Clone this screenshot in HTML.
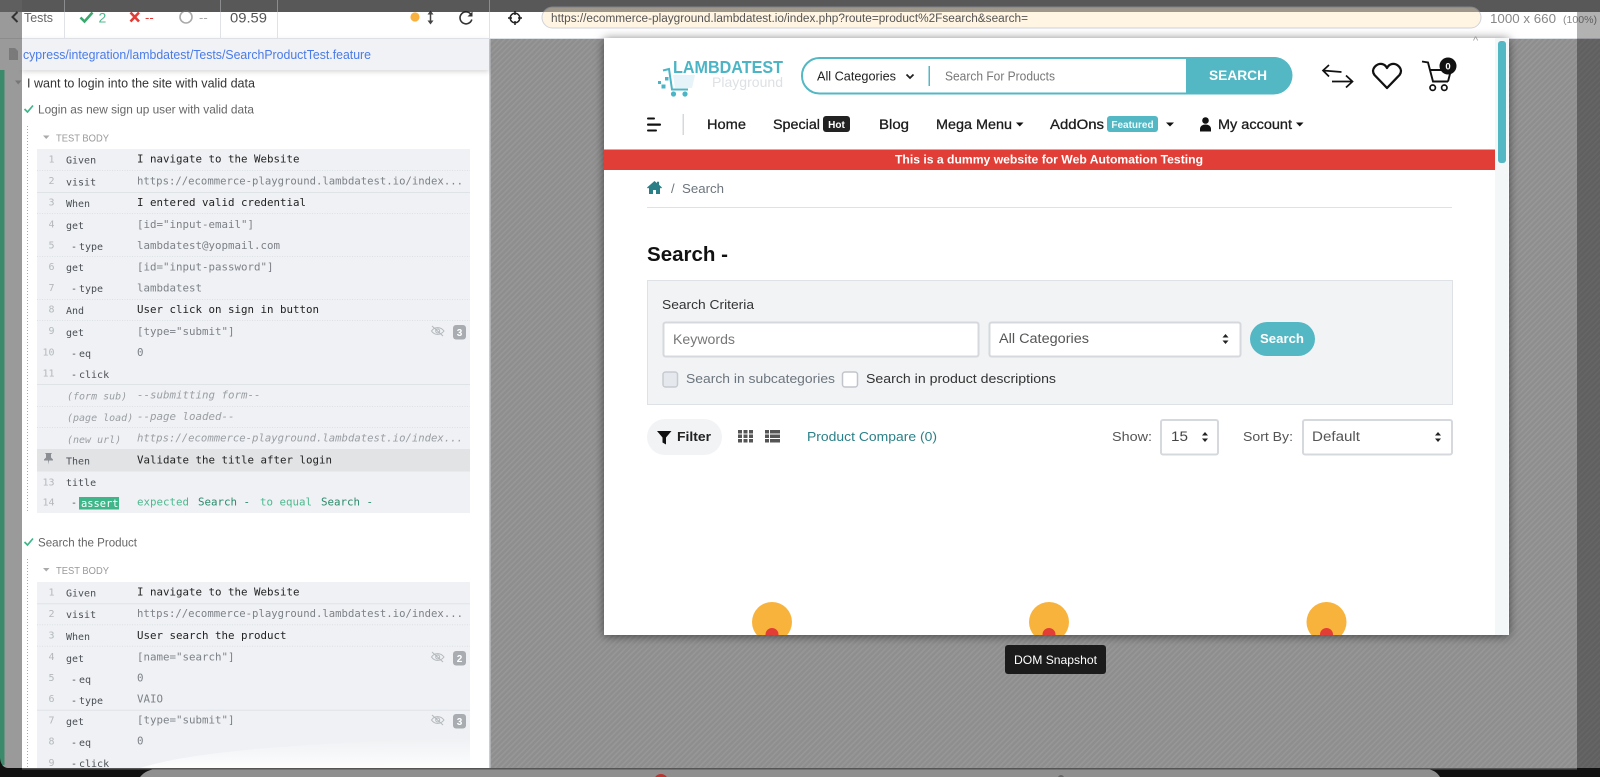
<!DOCTYPE html>
<html><head><meta charset="utf-8"><title>Cypress Runner</title>
<style>
html,body{margin:0;padding:0;width:1600px;height:777px;overflow:hidden;background:#8f8f8f}
svg{display:block}
text{font-family:"Liberation Sans",sans-serif;white-space:pre}
.m text,text.m{font-family:"DejaVu Sans Mono","Liberation Mono",monospace;font-size:10.8px}
.l text,text.l{font-family:"DejaVu Sans Mono","Liberation Mono",monospace;font-size:10px;fill:#4a4f55}
.n text{font-family:"DejaVu Sans Mono","Liberation Mono",monospace;font-size:10px;fill:#b4b8bc;text-anchor:end}
.i text{font-family:"DejaVu Sans Mono","Liberation Mono",monospace;font-size:10px;font-style:italic;fill:#9a9ea3}
.k{fill:#222}.g{fill:#7d8288}
.nav{font-size:13.5px;fill:#1c1c1c;stroke:#1c1c1c;stroke-width:.3px}
</style></head><body>
<svg xmlns="http://www.w3.org/2000/svg" width="1600" height="777" viewBox="0 0 1600 777">
<defs>
<pattern id="h" width="4" height="4" patternUnits="userSpaceOnUse" patternTransform="rotate(-45)"><rect width="4" height="4" fill="#8e8e8e"/><rect width="4" height="1.6" fill="#979797"/></pattern>
<filter id="sh" x="-5%" y="-5%" width="110%" height="110%"><feDropShadow dx="0" dy="1" stdDeviation="5" flood-color="#000" flood-opacity=".55"/></filter>
<filter id="sh2" x="-5%" y="-50%" width="110%" height="200%"><feDropShadow dx="0" dy="2" stdDeviation="2.5" flood-color="#000" flood-opacity=".15"/></filter>
<clipPath id="fr"><rect x="604" y="38" width="891" height="597"/></clipPath>
<linearGradient id="fade" x1="0" y1="0" x2="0" y2="1"><stop offset="0" stop-color="#fff" stop-opacity="0"/><stop offset="1" stop-color="#fff" stop-opacity=".85"/></linearGradient>
</defs>

<!-- stage -->
<rect x="489" y="38" width="1111" height="731" fill="url(#h)"/>

<!-- sidebar -->
<rect x="0" y="0" width="22" height="777" fill="#9a9a9a"/>
<rect x="0" y="70" width="4.5" height="695" fill="#3c8a6c"/>
<rect x="22" y="12" width="467" height="757" fill="#fff"/>
<rect x="489" y="38" width="1.5" height="731" fill="#c9cdd2"/>

<!-- test block 1 -->
<line x1="27.5" y1="126" x2="27.5" y2="513" stroke="#aaa" stroke-dasharray="1 2"/>
<rect x="37" y="149" width="433" height="364" fill="#eff1f4"/>
<rect x="37" y="449" width="433" height="22.5" fill="#e1e3e5"/>
<g stroke="#dde1e4" stroke-dasharray="1 1.5"><line x1="37" x2="470" y1="170.5" y2="170.5"/><line x1="37" x2="470" y1="213.5" y2="213.5"/><line x1="37" x2="470" y1="256.5" y2="256.5"/><line x1="37" x2="470" y1="299.5" y2="299.5"/><line x1="37" x2="470" y1="320.5" y2="320.5"/><line x1="37" x2="470" y1="406.5" y2="406.5"/><line x1="37" x2="470" y1="427.5" y2="427.5"/></g>
<g stroke="#dfe3e6"><line x1="37" x2="470" y1="192.5" y2="192.5"/><line x1="37" x2="470" y1="384.5" y2="384.5"/></g>

<path d="M15 80.5h6.5l-3.25 4z" fill="#777"/>
<text x="27" y="87.5" font-size="12.6" fill="#333" textLength="228" lengthAdjust="spacingAndGlyphs">I want to login into the site with valid data</text>
<path d="M24.5 109l3 3 5.5-6.5" fill="none" stroke="#3fb58a" stroke-width="1.7"/>
<text x="38" y="113.5" font-size="12.4" fill="#666" textLength="216" lengthAdjust="spacingAndGlyphs">Login as new sign up user with valid data</text>
<path d="M43 135.5h6.5l-3.25 3.5z" fill="#aaa"/>
<text x="56" y="141.5" font-size="10" fill="#999" textLength="53" lengthAdjust="spacingAndGlyphs">TEST BODY</text>

<g class="n">
<text x="54.5" y="162.5">1</text><text x="54.5" y="184">2</text><text x="54.5" y="205.5">3</text><text x="54.5" y="227.5">4</text><text x="54.5" y="248.5">5</text><text x="54.5" y="270">6</text><text x="54.5" y="291">7</text><text x="54.5" y="312.5">8</text><text x="54.5" y="334">9</text><text x="54.5" y="355.5">10</text><text x="54.5" y="376.5">11</text><text x="54.5" y="485.5">13</text><text x="54.5" y="505.5">14</text>
</g>
<g class="l">
<text x="66" y="163.5">Given</text><text x="66" y="185.5">visit</text><text x="66" y="207">When</text><text x="66" y="229">get</text><text x="71" y="250">-</text><text x="79" y="250">type</text>
<text x="66" y="271">get</text><text x="71" y="292">-</text><text x="79" y="292">type</text><text x="66" y="314">And</text><text x="66" y="336">get</text><text x="71" y="357">-</text><text x="79" y="357">eq</text><text x="71" y="378">-</text><text x="79" y="378">click</text>
<text x="66" y="464.5">Then</text><text x="66" y="486">title</text><text x="71" y="506">-</text>
</g>
<g class="i">
<text x="67" y="399.5">(form sub)</text><text x="67" y="421">(page load)</text><text x="67" y="443">(new url)</text>
</g>
<g class="m">
<text class="k" x="137" y="162.5">I navigate to the Website</text>
<text class="g" x="137" y="184.5" textLength="326" lengthAdjust="spacingAndGlyphs">https://ecommerce-playground.lambdatest.io/index...</text>
<text class="k" x="137" y="206">I entered valid credential</text>
<text class="g" x="137" y="228">[id="input-email"]</text>
<text class="g" x="137" y="249">lambdatest@yopmail.com</text>
<text class="g" x="137" y="270.5">[id="input-password"]</text>
<text class="g" x="137" y="291.5">lambdatest</text>
<text class="k" x="137" y="313">User click on sign in button</text>
<text class="g" x="137" y="335">[type="submit"]</text>
<text class="g" x="137" y="356">0</text>
<text x="137" y="398.5" fill="#9a9ea3" font-style="italic">--submitting form--</text>
<text x="137" y="420" fill="#9a9ea3" font-style="italic">--page loaded--</text>
<text x="137" y="441.5" fill="#9a9ea3" font-style="italic" textLength="326" lengthAdjust="spacingAndGlyphs">https://ecommerce-playground.lambdatest.io/index...</text>
<text class="k" x="137" y="463.5">Validate the title after login</text>
<text x="137" y="505.5" fill="#4eb98e">expected</text>
<text x="198" y="505.5" fill="#2a8a6a">Search -</text>
<text x="260" y="505.5" fill="#4eb98e">to equal</text>
<text x="321" y="505.5" fill="#2a8a6a">Search -</text>
</g>
<rect x="79" y="497" width="40" height="12.5" fill="#3fb58a"/>
<text class="m" x="81" y="507" fill="#fff" style="font-size:10.4px">assert</text>
<path d="M45 453h7l-1 1.2v3.3l2 2v1h-4l-.5 4-.5-4h-4v-1l2-2v-3.3z" fill="#8b8f93"/>
<g fill="none" stroke="#b4b8bc" stroke-width="1"><path d="M431.5 331c3-4.5 9-4.5 12.5 0c-3.5 4.5-9.500 4.5-12.5 0z"/><circle cx="437.7" cy="331" r="2"/><path d="M432 326l11 10"/></g>
<rect x="453" y="325" width="13" height="14.5" rx="3" fill="#a9adb1"/><text x="459.5" y="336" font-size="10" font-weight="bold" fill="#fff" text-anchor="middle">3</text>

<!-- test 2 -->
<path d="M24.5 542l3 3 5.5-6.5" fill="none" stroke="#3fb58a" stroke-width="1.7"/>
<text x="38" y="546.5" font-size="12.4" fill="#666" textLength="99" lengthAdjust="spacingAndGlyphs">Search the Product</text>
<line x1="27.5" y1="559" x2="27.5" y2="768" stroke="#aaa" stroke-dasharray="1 2"/>
<path d="M43 568h6.5l-3.25 3.5z" fill="#aaa"/>
<text x="56" y="574" font-size="10" fill="#999" textLength="53" lengthAdjust="spacingAndGlyphs">TEST BODY</text>
<rect x="37" y="582" width="433" height="187" fill="#eff1f4"/>
<g stroke="#dde1e4" stroke-dasharray="1 1.5"><line x1="37" x2="470" y1="624.7" y2="624.7"/><line x1="37" x2="470" y1="646.3" y2="646.3"/></g>
<g stroke="#dfe3e6"><line x1="37" x2="470" y1="603.7" y2="603.7"/><line x1="37" x2="470" y1="710.3" y2="710.3"/></g>
<g class="n">
<text x="54.5" y="595.5">1</text><text x="54.5" y="617">2</text><text x="54.5" y="638.5">3</text><text x="54.5" y="660">4</text><text x="54.5" y="681">5</text><text x="54.5" y="702">6</text><text x="54.5" y="723.5">7</text><text x="54.5" y="744.5">8</text><text x="54.5" y="766">9</text>
</g>
<g class="l">
<text x="66" y="596.5">Given</text><text x="66" y="618">visit</text><text x="66" y="640">When</text><text x="66" y="662">get</text><text x="71" y="683">-</text><text x="79" y="683">eq</text><text x="71" y="704">-</text><text x="79" y="704">type</text><text x="66" y="725">get</text><text x="71" y="746">-</text><text x="79" y="746">eq</text><text x="71" y="767">-</text><text x="79" y="767">click</text>
</g>
<g class="m">
<text class="k" x="137" y="595.5">I navigate to the Website</text>
<text class="g" x="137" y="617" textLength="326" lengthAdjust="spacingAndGlyphs">https://ecommerce-playground.lambdatest.io/index...</text>
<text class="k" x="137" y="639">User search the product</text>
<text class="g" x="137" y="660.5">[name="search"]</text>
<text class="g" x="137" y="681.5">0</text>
<text class="g" x="137" y="702.5">VAIO</text>
<text class="g" x="137" y="723.5">[type="submit"]</text>
<text class="g" x="137" y="744.5">0</text>
</g>
<g fill="none" stroke="#b4b8bc" stroke-width="1"><path d="M431.5 657c3-4.5 9-4.5 12.5 0c-3.5 4.5-9.5 4.5-12.5 0z"/><circle cx="437.7" cy="657" r="2"/><path d="M432 652l11 10"/><path d="M431.5 720c3-4.5 9-4.5 12.5 0c-3.5 4.5-9.5 4.5-12.5 0z"/><circle cx="437.7" cy="720" r="2"/><path d="M432 715l11 10"/></g>
<rect x="453" y="651" width="13" height="14.5" rx="3" fill="#a9adb1"/><text x="459.5" y="662" font-size="10" font-weight="bold" fill="#fff" text-anchor="middle">2</text>
<rect x="453" y="714" width="13" height="14.5" rx="3" fill="#a9adb1"/><text x="459.5" y="725" font-size="10" font-weight="bold" fill="#fff" text-anchor="middle">3</text>
<path d="M140 768C190 752 300 742 489 738V768Z" fill="url(#fade)"/>

<!-- top bars -->
<rect x="22" y="38" width="467" height="32" fill="#f0f2f5" filter="url(#sh2)"/>
<rect x="0" y="38" width="22" height="32" fill="#9a9a9a"/>
<line x1="0" x2="22" y1="38.5" y2="38.5" stroke="#8c8c8c"/>
<path d="M9 48h6l3 3v9H9z" fill="#7a7a7a"/>
<text x="23" y="59" font-size="13" fill="#4a7be8" textLength="348" lengthAdjust="spacingAndGlyphs">cypress/integration/lambdatest/Tests/SearchProductTest.feature</text>
<rect x="489" y="12" width="1111" height="26" fill="#fff"/>
<line x1="22" x2="1600" y1="38.5" y2="38.5" stroke="#dde0e5"/>
<g stroke="#dfe2e6"><line x1="64.5" x2="64.5" y1="0" y2="38"/><line x1="220.5" x2="220.5" y1="0" y2="38"/><line x1="277.5" x2="277.5" y1="0" y2="38"/><line x1="489.5" x2="489.5" y1="0" y2="38"/></g>
<path d="M17.5 12l-5 5 5 5" fill="none" stroke="#333" stroke-width="2"/>
<text x="24" y="22" font-size="13" fill="#666" textLength="29" lengthAdjust="spacingAndGlyphs">Tests</text>
<path d="M80.5 17.5l4 4 8-9" fill="none" stroke="#3aa76d" stroke-width="2.6"/>
<text x="98.5" y="22.5" font-size="14" fill="#4eb98e">2</text>
<path d="M130.5 12.5l8.5 9M139 12.5l-8.5 9" fill="none" stroke="#e33b35" stroke-width="2.6"/>
<text x="145" y="22" font-size="13" fill="#e33b35">--</text>
<circle cx="186" cy="17" r="6" fill="none" stroke="#aaa" stroke-width="1.6"/>
<text x="199" y="22" font-size="13" fill="#aaa">--</text>
<text x="230" y="22.5" font-size="14" fill="#555" textLength="37" lengthAdjust="spacingAndGlyphs">09.59</text>
<circle cx="415" cy="17" r="4.6" fill="#f8b13f"/>
<path d="M430.5 12v11" stroke="#444" stroke-width="1.5"/><path d="M427.5 14.5l3-4 3 4zM427.5 20.5l3 4 3-4z" fill="#444"/>
<path d="M471 14.5a6 6 0 1 0 .8 5" fill="none" stroke="#333" stroke-width="1.6"/><path d="M472.5 11.5v5h-5z" fill="#333"/>
<circle cx="515" cy="18" r="4.8" fill="none" stroke="#222" stroke-width="1.5"/><path d="M515 11v4M515 21v4M508 18h4M518 18h4" stroke="#222" stroke-width="1.5"/>

<rect x="542" y="7" width="939" height="21" rx="10.5" fill="#fff5e2" stroke="#cfd2dc"/>
<text x="551" y="22" font-size="11.5" fill="#555" textLength="477" lengthAdjust="spacingAndGlyphs">https://ecommerce-playground.lambdatest.io/index.php?route=product%2Fsearch&amp;search=</text>
<text x="1490" y="23" font-size="13" fill="#888" textLength="66" lengthAdjust="spacingAndGlyphs">1000 x 660</text>
<text x="1563" y="23" font-size="10" fill="#888" textLength="34" lengthAdjust="spacingAndGlyphs">(100%)</text>

<!-- iframe -->
<rect x="604" y="38" width="905" height="597" fill="#fff" filter="url(#sh)"/>
<rect x="1495" y="38" width="13.5" height="597" fill="#f4f7f8"/>
<rect x="1498" y="41" width="8" height="122" rx="3" fill="#53b7c4"/>
<g clip-path="url(#fr)">
<!-- logo -->
<path d="M663 70.5l6-1.500 3 20.5h16" fill="none" stroke="#4cb5c5" stroke-width="2"/>
<path d="M673 75h22l-3 13h-17z" fill="#e6f3f8"/>
<circle cx="673.5" cy="94" r="2.6" fill="#4cb5c5"/><circle cx="685" cy="94" r="2.6" fill="#4cb5c5"/>
<g fill="#4cb5c5"><rect x="658" y="81" width="3" height="3"/><rect x="661.5" y="84.5" width="4" height="4"/><rect x="665" y="77" width="3.5" height="3.5"/></g>
<text x="673" y="73" font-size="17.5" font-weight="bold" fill="#4cb5c5" textLength="110" lengthAdjust="spacingAndGlyphs">LAMBDATEST</text>
<text x="712" y="87" font-size="14" fill="#dde1e4" textLength="71" lengthAdjust="spacingAndGlyphs">Playground</text>
<!-- search -->
<rect x="802" y="58" width="489" height="35.5" rx="17.5" fill="#fff" stroke="#53b7c4" stroke-width="2"/>
<path d="M1186 57h88a18.5 18.5 0 0 1 0 37h-88z" fill="#53b7c4"/>
<text x="817" y="80.5" font-size="12.6" fill="#222" textLength="79" lengthAdjust="spacingAndGlyphs">All Categories</text>
<path d="M906.5 74.5l3.5 3.5 3.5-3.5" fill="none" stroke="#222" stroke-width="1.8"/>
<rect x="928.5" y="66" width="1.5" height="20" fill="#53b7c4"/>
<text x="945" y="80.5" font-size="12.6" fill="#777" textLength="110" lengthAdjust="spacingAndGlyphs">Search For Products</text>
<text x="1209" y="80" font-size="14" font-weight="bold" fill="#fff" textLength="58" lengthAdjust="spacingAndGlyphs">SEARCH</text>
<!-- icons -->
<g fill="none" stroke="#111" stroke-width="1.7"><path d="M1323 70.5l18.5 1.5M1329 65l-6 5.5 6 6"/><path d="M1332 81.5h20M1346 75.5l6.5 6-6.5 6"/></g>
<path d="M1387 88L1374.5 75C1370 69 1377 63 1382 64C1384.5 64.5 1386 66 1387 68C1388 66 1389.5 64.5 1392 64C1397 63 1404 69 1399.5 75Z" fill="none" stroke="#111" stroke-width="2.3" stroke-linejoin="round"/>
<path d="M1422 61.5l6 1 5 19h15M1430 70h21l-3 11.5" fill="none" stroke="#111" stroke-width="1.9"/>
<circle cx="1432.7" cy="87.7" r="2.7" fill="none" stroke="#111" stroke-width="1.7"/><circle cx="1444.3" cy="87.7" r="2.7" fill="none" stroke="#111" stroke-width="1.7"/>
<circle cx="1448" cy="66" r="8.5" fill="#111"/><text x="1448" y="69.5" font-size="9.5" font-weight="bold" fill="#fff" text-anchor="middle">0</text>
<!-- nav -->
<g fill="#111"><rect x="647" y="117.5" width="8" height="2" rx="1"/><rect x="647" y="123.5" width="14" height="2.2" rx="1"/><rect x="647" y="129.5" width="10" height="2" rx="1"/></g>
<rect x="682.5" y="114" width="1.5" height="21" fill="#d5d8dc"/>
<text class="nav" x="707" y="129" textLength="39" lengthAdjust="spacingAndGlyphs">Home</text>
<text class="nav" x="773" y="129" textLength="47" lengthAdjust="spacingAndGlyphs">Special</text>
<text class="nav" x="879" y="129" textLength="30" lengthAdjust="spacingAndGlyphs">Blog</text>
<text class="nav" x="936" y="129" textLength="76" lengthAdjust="spacingAndGlyphs">Mega Menu</text>
<text class="nav" x="1050" y="129" textLength="54" lengthAdjust="spacingAndGlyphs">AddOns</text>
<text class="nav" x="1218" y="129" textLength="74" lengthAdjust="spacingAndGlyphs">My account</text>
<rect x="823" y="116" width="27" height="16" rx="3" fill="#222"/><text x="836.5" y="128" font-size="10" font-weight="bold" fill="#fff" text-anchor="middle">Hot</text>
<rect x="1107" y="116" width="51" height="16" rx="3" fill="#53b7c4"/><text x="1132.5" y="128" font-size="10" font-weight="bold" fill="#eefafc" text-anchor="middle">Featured</text>
<g fill="#111"><path d="M1016 122.5h7.5l-3.75 4zM1166 122.5h8l-4 4zM1296 122.5h7.5l-3.75 4z"/><circle cx="1205.5" cy="120.5" r="3.3"/><path d="M1200 131.5v-2.500c0-2.500 2-4.500 5.500-4.500s5.500 2 5.500 4.500v2.500z"/></g>
<!-- banner -->
<rect x="604" y="149.5" width="891" height="20.5" fill="#e03e36"/>
<text x="895" y="163.5" font-size="12" font-weight="bold" fill="#fff" textLength="308" lengthAdjust="spacingAndGlyphs">This is a dummy website for Web Automation Testing</text>
<!-- breadcrumb -->
<path d="M654.5 181L647 187.5l1 1 1-.8v6.300h4v-4h3v4h4v-6.300l1 .8 1-1-3-2.700v-3h-2v1.300z" fill="#2a7f86"/>
<text x="671" y="193" font-size="13" fill="#6c757d">/</text>
<text x="682" y="193" font-size="13" fill="#6c757d" textLength="42" lengthAdjust="spacingAndGlyphs">Search</text>
<line x1="647" x2="1452" y1="207.5" y2="207.5" stroke="#dee2e6"/>
<text x="647" y="261" font-size="20" font-weight="bold" fill="#111" textLength="81" lengthAdjust="spacingAndGlyphs">Search -</text>
<!-- panel -->
<rect x="647.5" y="280.5" width="805" height="124" fill="#f1f3f5" stroke="#dee2e6"/>
<text x="662" y="309" font-size="13" fill="#333" textLength="92" lengthAdjust="spacingAndGlyphs">Search Criteria</text>
<rect x="663.5" y="322.5" width="315" height="34" rx="2" fill="#fff" stroke="#d5d8dc" stroke-width="2"/>
<text x="673" y="344" font-size="13.5" fill="#777" textLength="62" lengthAdjust="spacingAndGlyphs">Keywords</text>
<rect x="989.5" y="322.5" width="251" height="34" rx="2" fill="#fff" stroke="#d5d8dc" stroke-width="2"/>
<text x="999" y="343" font-size="13.5" fill="#555" textLength="90" lengthAdjust="spacingAndGlyphs">All Categories</text>
<path d="M1222.5 337.5l3-3.500 3 3.500zM1222.5 340.5l3 3.500 3-3.500z" fill="#222"/>
<rect x="1250" y="322" width="65" height="34" rx="17" fill="#53b7c4"/>
<text x="1260" y="343" font-size="13" font-weight="bold" fill="#fff" textLength="44" lengthAdjust="spacingAndGlyphs">Search</text>
<rect x="663" y="372" width="14.5" height="15" rx="2.5" fill="#e5e8ec" stroke="#c7cbd1" stroke-width="1.5"/>
<text x="686" y="383" font-size="13" fill="#6c757d" textLength="149" lengthAdjust="spacingAndGlyphs">Search in subcategories</text>
<rect x="842.5" y="372" width="15" height="15" rx="2.5" fill="#fff" stroke="#c1c5cb" stroke-width="1.5"/>
<text x="866" y="383" font-size="13" fill="#333" textLength="190" lengthAdjust="spacingAndGlyphs">Search in product descriptions</text>
<!-- toolbar -->
<rect x="647" y="419" width="75" height="36" rx="18" fill="#f1f3f5"/>
<path d="M657 431h14.5l-5.500 6.500v7l-3.500-2v-5z" fill="#111"/>
<text x="677" y="441" font-size="13" font-weight="bold" fill="#222" textLength="34" lengthAdjust="spacingAndGlyphs">Filter</text>
<g fill="#555"><rect x="738" y="430" width="4" height="3.5"/><rect x="743.5" y="430" width="4" height="3.5"/><rect x="749" y="430" width="4" height="3.5"/><rect x="738" y="434.5" width="4" height="3.5"/><rect x="743.5" y="434.5" width="4" height="3.5"/><rect x="749" y="434.5" width="4" height="3.5"/><rect x="738" y="439" width="4" height="3.5"/><rect x="743.5" y="439" width="4" height="3.5"/><rect x="749" y="439" width="4" height="3.5"/>
<rect x="765" y="430" width="4" height="3.5"/><rect x="770" y="430" width="10" height="3.5"/><rect x="765" y="434.5" width="4" height="3.5"/><rect x="770" y="434.5" width="10" height="3.5"/><rect x="765" y="439" width="4" height="3.5"/><rect x="770" y="439" width="10" height="3.5"/></g>
<text x="807" y="441" font-size="13" fill="#2a8088" textLength="130" lengthAdjust="spacingAndGlyphs">Product Compare (0)</text>
<text x="1112" y="441" font-size="13" fill="#555" textLength="40" lengthAdjust="spacingAndGlyphs">Show:</text>
<rect x="1161" y="420" width="57" height="34.5" rx="2" fill="#fff" stroke="#d5d8dc" stroke-width="2"/>
<text x="1171" y="441" font-size="13.5" fill="#444" textLength="17" lengthAdjust="spacingAndGlyphs">15</text>
<path d="M1202 435.5l3-3.500 3 3.500zM1202 438.5l3 3.500 3-3.500z" fill="#222"/>
<text x="1243" y="441" font-size="13" fill="#555" textLength="50" lengthAdjust="spacingAndGlyphs">Sort By:</text>
<rect x="1303" y="420" width="149" height="34.5" rx="2" fill="#fff" stroke="#d5d8dc" stroke-width="2"/>
<text x="1312" y="441" font-size="13.5" fill="#555" textLength="48" lengthAdjust="spacingAndGlyphs">Default</text>
<path d="M1435 435.5l3-3.500 3 3.500zM1435 438.5l3 3.500 3-3.500z" fill="#222"/>
<!-- loaders -->
<g fill="#f8b33d"><circle cx="772" cy="622" r="20"/><circle cx="1049" cy="622" r="20"/><circle cx="1326.5" cy="622" r="20"/></g>
<g fill="#e23e36"><circle cx="772" cy="634.5" r="6.5"/><circle cx="1049" cy="634.5" r="6.5"/><circle cx="1326.5" cy="634.5" r="6.5"/></g>
</g>
<text x="1473" y="44" font-size="11" fill="#999">^</text>

<!-- tooltip -->
<rect x="1005" y="645" width="101" height="29" rx="3" fill="#1b1b1b"/>
<text x="1014" y="664" font-size="12" fill="#fff" textLength="83" lengthAdjust="spacingAndGlyphs">DOM Snapshot</text>

<!-- overlays -->
<rect x="0" y="0" width="1600" height="12" fill="#000" opacity=".38"/>
<rect x="1577" y="12" width="23" height="26" fill="#000" opacity=".3"/>
<rect x="1577" y="38" width="23" height="731" fill="#000" opacity=".32"/>

<!-- bottom -->
<rect x="0" y="768" width="1600" height="9" fill="#111"/>
<path d="M140 777c4-5 10-8 18-8H1425c7 0 12 3 15 8z" fill="#8f8f8f"/>
<rect x="22" y="768" width="1555" height="1.5" fill="#555"/>
<path d="M0 757c0 6 3 11 8 11H0z" fill="#111"/>
<circle cx="661" cy="781" r="7" fill="#b8362f"/>
<circle cx="1061" cy="778" r="3" fill="#666"/>
</svg>
</body></html>
